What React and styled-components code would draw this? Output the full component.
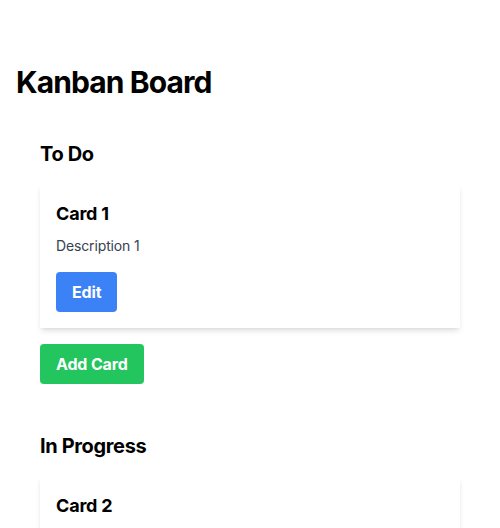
import React from 'react';
import styled, { createGlobalStyle } from 'styled-components';

const GlobalStyle = createGlobalStyle`
  * { box-sizing: border-box; }
  body {
    margin: 0;
    background: #ffffff;
    font-family: Inter, 'Noto Sans', sans-serif;
    color: #000;
  }
`;

const columns = [
  { title: 'To Do', cards: [{ title: 'Card 1', description: 'Description 1' }] },
  { title: 'In Progress', cards: [{ title: 'Card 2', description: 'Description 2' }] },
  { title: 'Done', cards: [{ title: 'Card 3', description: 'Description 3' }] },
];

const Board = () => {
  return (
    <Page>
      <Title>Kanban Board</Title>
      {columns.map((col) => (
        <Column key={col.title}>
          <ColumnTitle>{col.title}</ColumnTitle>
          {col.cards.map((card) => (
            <Card key={card.title}>
              <CardTitle>{card.title}</CardTitle>
              <CardText>{card.description}</CardText>
              <Button color="#3b82f6">Edit</Button>
            </Card>
          ))}
          <Button color="#22c55e">Add Card</Button>
        </Column>
      ))}
    </Page>
  );
};

const App = () => (
  <>
    <GlobalStyle />
    <Board />
  </>
);

const Page = styled.div`
  padding: 64px 16px 16px;
`;

const Title = styled.h1`
  margin: 0 0 16px;
  font-size: 30px;
  line-height: 36px;
  font-weight: 700;
  letter-spacing: -0.03em;
`;

const Column = styled.div`
  padding: 24px;
`;

const ColumnTitle = styled.h2`
  margin: 0 0 16px;
  font-size: 20px;
  line-height: 28px;
  font-weight: 700;
  letter-spacing: -0.018em;
`;

const Card = styled.div`
  background: #fff;
  padding: 16px;
  margin-bottom: 16px;
  box-shadow: 0 4px 6px -1px rgba(0, 0, 0, 0.1), 0 2px 4px -2px rgba(0, 0, 0, 0.1);
`;

const CardTitle = styled.h3`
  margin: 0 0 8px;
  font-size: 18px;
  line-height: 28px;
  font-weight: 700;
  letter-spacing: -0.01em;
`;

const CardText = styled.p`
  margin: 0 0 16px;
  font-size: 14px;
  line-height: 20px;
  color: #374151;
  letter-spacing: -0.01em;
`;

const Button = styled.button`
  display: inline-block;
  border: none;
  border-radius: 4px;
  padding: 8px 16px;
  background: ${({ color }) => color};
  color: #fff;
  font-family: Inter, 'Noto Sans', sans-serif;
  font-size: 16px;
  line-height: 24px;
  font-weight: 700;
  letter-spacing: -0.01em;
  cursor: pointer;
`;

export default App;
